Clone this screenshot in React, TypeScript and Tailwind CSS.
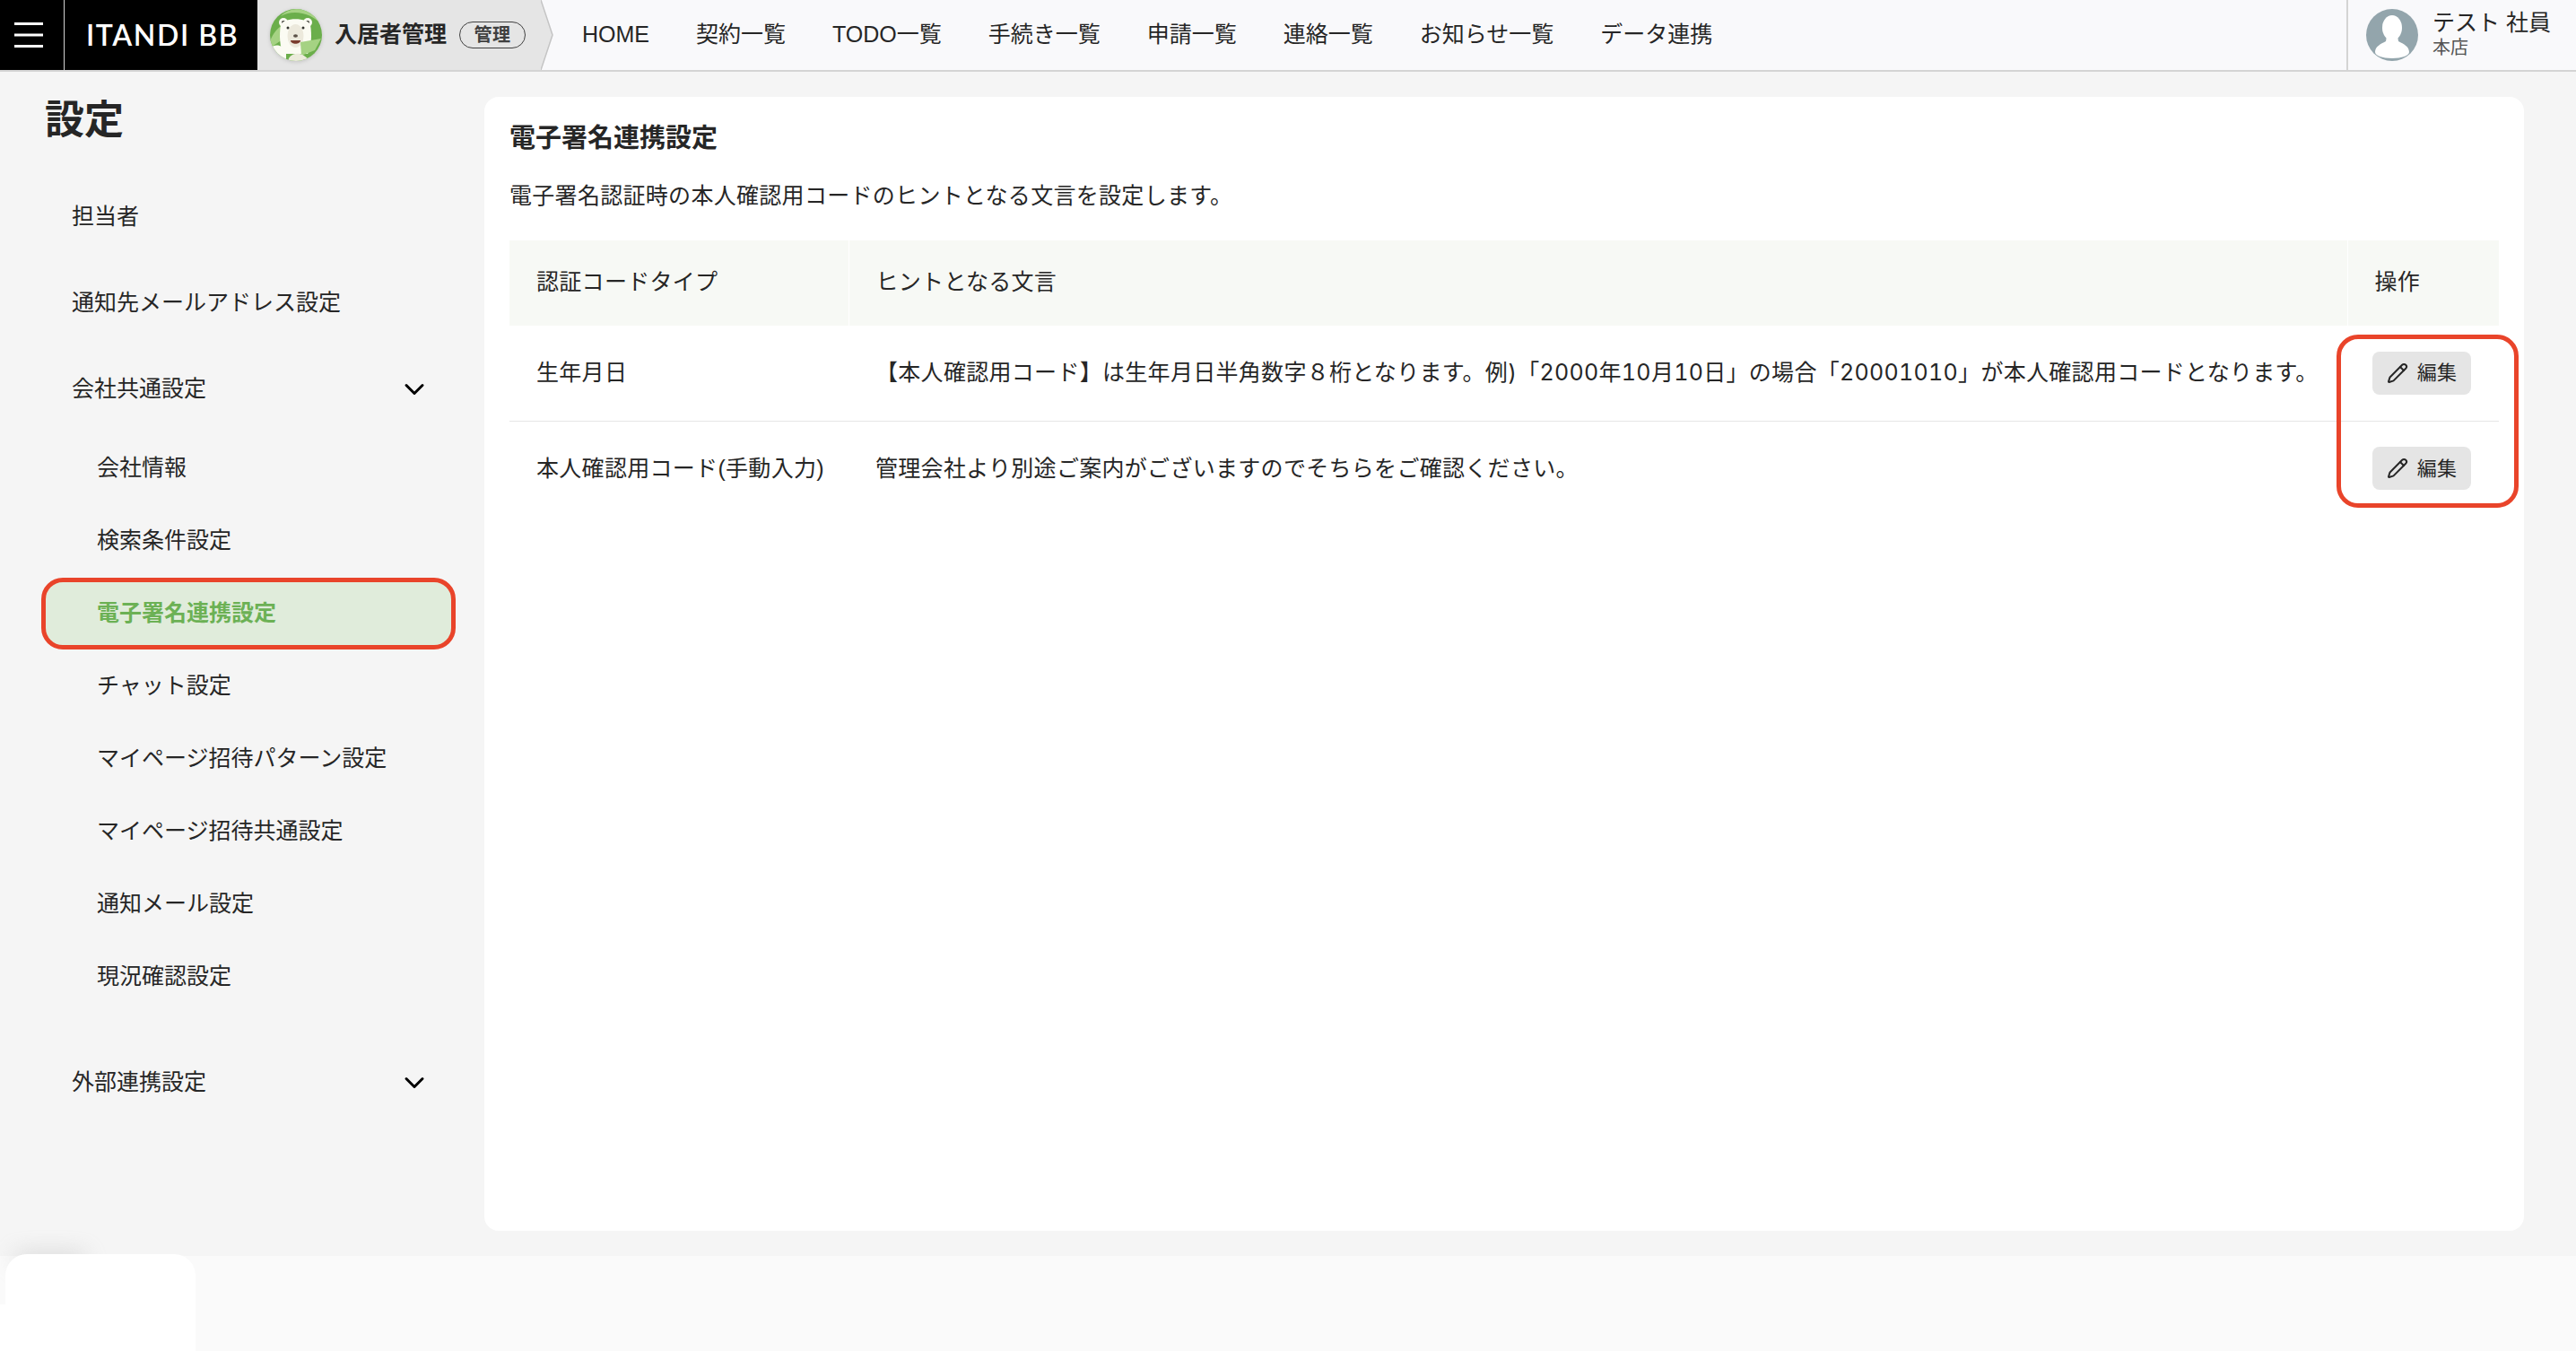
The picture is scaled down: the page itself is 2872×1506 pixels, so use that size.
import { ChevronDown, Pencil } from "lucide-react";

const NAV = ["HOME", "契約一覧", "TODO一覧", "手続き一覧", "申請一覧", "連絡一覧", "お知らせ一覧", "データ連携"];

const SUB_ITEMS = [
  "会社情報",
  "検索条件設定",
  "電子署名連携設定",
  "チャット設定",
  "マイページ招待パターン設定",
  "マイページ招待共通設定",
  "通知メール設定",
  "現況確認設定",
];

const ROWS = [
  {
    type: "生年月日",
    hint: "【本人確認用コード】は生年月日半角数字８桁となります。例)「2000年10月10日」の場合「20001010」が本人確認用コードとなります。",
  },
  {
    type: "本人確認用コード(手動入力)",
    hint: "管理会社より別途ご案内がございますのでそちらをご確認ください。",
  },
];

function BearLogo() {
  return (
    <svg viewBox="0 0 58 58" className="size-[58px] shrink-0 drop-shadow-sm">
      <defs>
        <clipPath id="bear-clip">
          <circle cx="29" cy="29" r="29" />
        </clipPath>
      </defs>
      <g clipPath="url(#bear-clip)">
        <rect width="58" height="58" fill="#6bae4b" />
        <path d="M12 8 C26 0 46 4 58 18 L58 10 C46 -2 22 -4 12 8Z" fill="#a5d283" />
        <path d="M0 36 C4 26 8 22 14 18 L14 34 C8 38 2 42 0 44Z" fill="#a5d283" />
        <circle cx="15" cy="15" r="5" fill="#fbfbf3" />
        <circle cx="42" cy="15" r="5" fill="#fbfbf3" />
        <circle cx="15" cy="15" r="2" fill="#3a3a34" />
        <circle cx="42" cy="15" r="2" fill="#3a3a34" />
        <path d="M12 18 C14 9 43 9 45 18 C47 28 46 44 42 50 L15 50 C11 44 10 28 12 18Z" fill="#fbfbf3" />
        <ellipse cx="28.500" cy="30" rx="9" ry="13" fill="#ece9dc" />
        <circle cx="20" cy="21" r="1.500" fill="#33332e" />
        <circle cx="37" cy="21" r="1.500" fill="#33332e" />
        <ellipse cx="28.500" cy="30" rx="2.500" ry="1.800" fill="#5b5148" />
        <path d="M23 35 L34 35 C34 40 23 40 23 35Z" fill="#7a3b2e" />
        <path d="M34 37 L57 33 L50 46 L35 52Z" fill="#a5d283" />
        <path d="M0 44 C6 38 14 40 18 48 L18 58 L0 58Z" fill="#fbfbf3" />
        <path d="M20 58 C22 48 36 46 44 58Z" fill="#ecebdc" />
      </g>
    </svg>
  );
}

function UserAvatar() {
  return (
    <svg viewBox="0 0 58 58" className="size-[58px] shrink-0">
      <defs>
        <clipPath id="avatar-clip">
          <circle cx="29" cy="29" r="29" />
        </clipPath>
      </defs>
      <g clipPath="url(#avatar-clip)">
        <rect width="58" height="58" fill="#93a5ac" />
        <ellipse cx="29" cy="21" rx="11" ry="14" fill="#fff" />
        <path d="M23 30 L35 30 L36 36 C42 39 48 42 48 48 C48 52 40 55 29 55 C18 55 10 52 10 48 C10 42 16 39 22 36Z" fill="#fff" />
      </g>
    </svg>
  );
}

function SideItem({ label, open }: { label: string; open?: boolean }) {
  return (
    <div className="flex h-24 items-center justify-between pl-20 pr-15 text-[25px] text-neutral-800">
      <span>{label}</span>
      {open !== undefined && <ChevronDown size={36} strokeWidth={2} className="text-black" />}
    </div>
  );
}

export default function App() {
  return (
    <div className="relative flex h-screen flex-col overflow-hidden bg-[#f5f5f5] font-['Liberation_Sans','Noto_Sans_CJK_JP',sans-serif] text-neutral-800">
      {/* Header */}
      <header className="flex h-20 shrink-0 items-stretch border-b-2 border-neutral-300 bg-[#f9f9fb]">
        <div className="flex w-[71px] items-center bg-black pl-4">
          <svg viewBox="0 0 32 28" className="h-7 w-8">
            <path d="M0 1.500H32M0 14H32M0 26.500H32" stroke="#fff" strokeWidth="3" />
          </svg>
        </div>
        <div className="flex w-[216px] items-center border-l border-neutral-300 bg-black pl-6">
          <span className="font-['Lato',sans-serif] text-[32px] font-semibold tracking-wider whitespace-nowrap text-white">ITANDI BB</span>
        </div>
        <div className="flex w-[316px] items-center gap-3.5 bg-neutral-200 pl-3.5">
          <BearLogo />
          <span className="text-[25px] font-bold whitespace-nowrap">入居者管理</span>
          <span className="flex h-7.5 w-[74px] items-center justify-center rounded-full border border-neutral-700 text-xl font-bold tracking-wide text-neutral-700">管理</span>
        </div>
        <svg viewBox="0 0 14 78" preserveAspectRatio="none" className="w-3.5 shrink-0">
          <polygon points="0,0 13,39 0,78" fill="#e5e5e5" />
          <polyline points="0,0 13,39 0,78" fill="none" stroke="#c4c4c4" strokeWidth="1.500" />
        </svg>
        <nav className="flex items-center gap-13 pl-8 text-[25px] whitespace-nowrap">
          {NAV.map((item) => (
            <span key={item}>{item}</span>
          ))}
        </nav>
        <div className="ml-auto flex w-64 items-center gap-4 border-l-2 border-neutral-300 pl-5">
          <UserAvatar />
          <div className="flex flex-col">
            <span className="text-[25px] leading-7 whitespace-nowrap">テスト 社員</span>
            <span className="text-xl leading-7 text-neutral-600">本店</span>
          </div>
        </div>
      </header>

      {/* Body */}
      <div className="flex min-h-0 flex-1">
        <aside className="flex w-[540px] shrink-0 flex-col pt-8">
          <h1 className="pl-12.5 text-[44px] leading-11 font-bold">設定</h1>
          <div className="mt-9.5 flex flex-col">
            <SideItem label="担当者" />
            <SideItem label="通知先メールアドレス設定" />
            <SideItem label="会社共通設定" open />
            <div className="flex flex-col gap-px">
              {SUB_ITEMS.map((item) =>
                item === "電子署名連携設定" ? (
                  <div key={item} className="ml-11.5 mr-8 flex h-20 items-center rounded-3xl border-[5px] border-[#e9442a] bg-[#e0ecdb] pl-[57px] text-[25px] font-bold text-[#6cb155]">
                    {item}
                  </div>
                ) : (
                  <div key={item} className="ml-11 mr-8 flex h-20 items-center pl-16 text-[25px]">
                    {item}
                  </div>
                ),
              )}
            </div>
            <div className="mt-7.5">
              <SideItem label="外部連携設定" open />
            </div>
          </div>
        </aside>

        <main className="my-7 mr-[58px] flex-1 rounded-2xl bg-white px-7 pt-6.5">
          <h2 className="text-[29px] leading-10 font-bold">電子署名連携設定</h2>
          <p className="mt-6 text-[25px] leading-10 tracking-[0.3px]">電子署名認証時の本人確認用コードのヒントとなる文言を設定します。</p>

          <div className="relative mt-7.5">
            <table className="w-full table-fixed text-left text-[25px] tracking-[0.3px]">
              <thead>
                <tr className="h-[95px] bg-[#f7f9f5]">
                  <th className="w-[378px] border-r border-white pr-7 pl-7.5 pb-0.5 font-normal">認証コードタイプ</th>
                  <th className="border-r border-white pr-7 pl-7.5 pb-0.5 font-normal">ヒントとなる文言</th>
                  <th className="w-[169px] pr-7 pl-7.5 pb-0.5 font-normal">操作</th>
                </tr>
              </thead>
              <tbody>
                {ROWS.map((row, i) => (
                  <tr key={row.type} className={`h-[106px] ${i === 0 ? "border-b border-neutral-200" : ""}`}>
                    <td className="pr-7 pl-7.5 whitespace-nowrap">{row.type}</td>
                    <td className="pr-7 pl-7.5 font-['Inter','Noto_Sans_CJK_JP',sans-serif] tabular-nums whitespace-nowrap">{row.hint}</td>
                    <td className="pr-7 pl-7">
                      <button className="flex h-12 w-[110px] items-center justify-center gap-2.5 rounded-lg bg-neutral-200 text-[22px]">
                        <Pencil size={24} strokeWidth={2} />
                        編集
                      </button>
                    </td>
                  </tr>
                ))}
              </tbody>
            </table>
            {/* Red annotation around the edit buttons */}
            <div className="pointer-events-none absolute top-[105px] -right-5.5 h-[193px] w-[203px] rounded-3xl border-[5px] border-[#e9442a]" />
          </div>
        </main>
      </div>

      {/* Bottom band */}
      <div className="h-[106px] shrink-0 bg-neutral-50" />

      {/* Covered chat widget */}
      <div className="absolute bottom-24 left-4 h-3 w-20 rounded-full bg-neutral-400 opacity-50 blur-md" />
      <div className="absolute bottom-0 left-1.5 h-[108px] w-[212px] rounded-t-3xl bg-white" />
      <div className="absolute bottom-0 left-0 h-[52px] w-[218px] bg-white" />
    </div>
  );
}
